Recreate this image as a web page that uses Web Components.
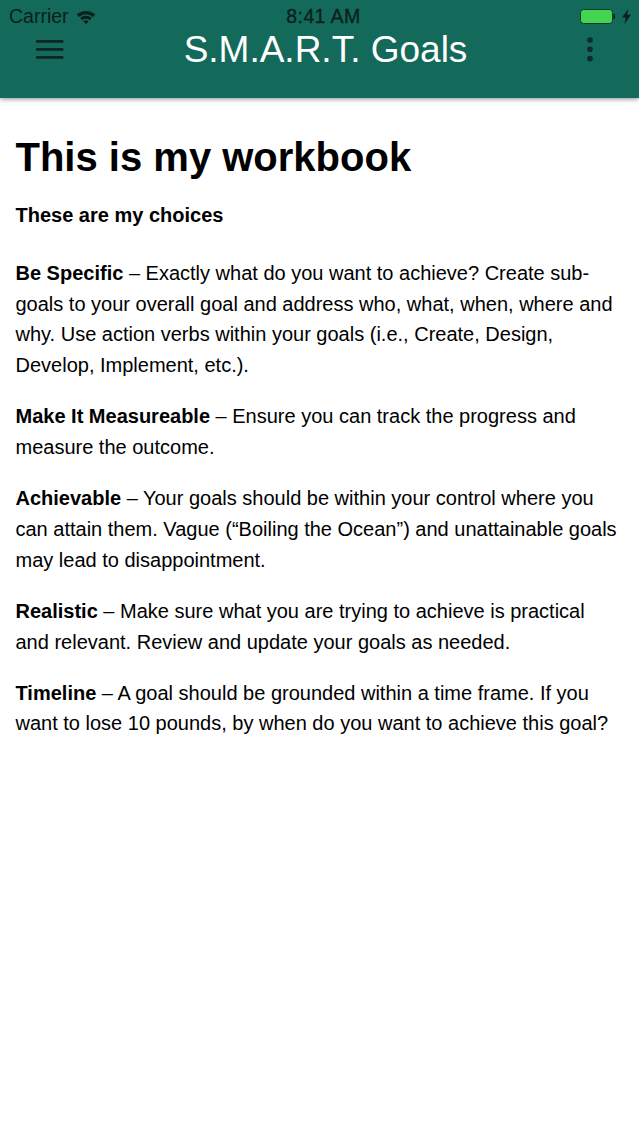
<!DOCTYPE html>
<html>
<head>
<meta charset="utf-8">
<title>S.M.A.R.T. Goals</title>
<style>
  html, body { margin: 0; padding: 0; background: #fff; }
  body { font-family: "Liberation Sans", Arial, sans-serif; color: #000; overflow: hidden; }
</style>
</head>
<body>
<goal-header title="S.M.A.R.T. Goals"></goal-header>
<goal-page>
  <span slot="heading">This is my workbook</span>
  <span slot="subheading">These are my choices</span>
  <goal-item name="Be Specific">Exactly what do you want to achieve? Create sub-<br>goals to your overall goal and address who, what, when, where and<br>why. Use action verbs within your goals (i.e., Create, Design,<br>Develop, Implement, etc.).</goal-item>
  <goal-item name="Make It Measureable">Ensure you can track the progress and<br>measure the outcome.</goal-item>
  <goal-item name="Achievable">Your goals should be within your control where you<br>can attain them. Vague (“Boiling the Ocean”) and unattainable goals<br>may lead to disappointment.</goal-item>
  <goal-item name="Realistic">Make sure what you are trying to achieve is practical<br>and relevant. Review and update your goals as needed.</goal-item>
  <goal-item name="Timeline">A goal should be grounded within a time frame. If you<br>want to lose 10 pounds, by when do you want to achieve this goal?</goal-item>
</goal-page>
<script>
class GoalHeader extends HTMLElement {
  constructor() {
    super();
    this.attachShadow({ mode: 'open' });
    this.shadowRoot.innerHTML = `
      <style>
        :host {
          display: block;
          height: 98px;
          background: #13695a;
          box-shadow: 0 1px 5px rgba(0, 0, 0, 0.45);
          position: relative;
        }
        .status {
          height: 32px;
          padding: 0 8px 0 9px;
          display: grid;
          grid-template-columns: 1fr auto 1fr;
          align-items: center;
          font-size: 19.5px;
          color: #0b1f1c;
        }
        .left { display: flex; align-items: center; gap: 7px; }
        .right { display: flex; align-items: center; justify-content: flex-end; gap: 7px; }
        .time { -webkit-text-stroke: 0.3px #0b1f1c; letter-spacing: 0.4px; margin-left: 7px; }
        .bar {
          display: flex;
          align-items: flex-start;
          justify-content: space-between;
          padding: 0 46px 0 35px;
        }
        .title {
          font-size: 37px;
          line-height: 36px;
          color: #fff;
        }
        svg { display: block; }
      </style>
      <div class="status">
        <div class="left">
          <span>Carrier</span>
          <svg width="20" height="15" viewBox="0 0 20 15">
            <path d="M0.8 5.6 A13.5 13.5 0 0 1 19.2 5.6 L17 8 A10.3 10.3 0 0 0 3 8 Z" fill="#0b1f1c"/>
            <path d="M4.2 9 A8.500 8.500 0 0 1 15.800 9 L13.700 11.300 A5.500 5.500 0 0 0 6.300 11.300 Z" fill="#0b1f1c"/>
            <path d="M7.400 12.400 A3.800 3.800 0 0 1 12.600 12.400 L10 15 Z" fill="#0b1f1c"/>
          </svg>
        </div>
        <span class="time">8:41 AM</span>
        <div class="right">
          <svg width="36" height="15" viewBox="0 0 36 15">
            <rect x="1.5" y="0.5" width="32" height="14" rx="3" fill="#43d552" stroke="#0b3a2c" stroke-width="1"/>
            <rect x="34.4" y="5" width="1.6" height="5" rx="0.8" fill="#0b1f1c"/>
          </svg>
          <svg width="9" height="15" viewBox="0 0 9 15">
            <path d="M6.200 0 L0 8.500 H3.600 L2.500 15 L9 5.800 H5.200 Z" fill="#0b1f1c"/>
          </svg>
        </div>
      </div>
      <div class="bar">
        <svg width="29" height="20" viewBox="0 0 29 20" style="margin-top:8px">
          <rect x="1" y="0" width="27.500" height="2.700" rx="1" fill="#0f2423"/>
          <rect x="1" y="8" width="27.500" height="2.700" rx="1" fill="#0f2423"/>
          <rect x="1" y="16" width="27.500" height="2.700" rx="1" fill="#0f2423"/>
        </svg>
        <span class="title"></span>
        <svg width="6" height="25" viewBox="0 0 6 25" style="margin-top:5px">
          <circle cx="3" cy="3" r="2.8" fill="#0f2a2e"/>
          <circle cx="3" cy="12.300" r="2.8" fill="#0f2a2e"/>
          <circle cx="3" cy="21.600" r="2.8" fill="#0f2a2e"/>
        </svg>
      </div>
    `;
    this.shadowRoot.querySelector('.title').textContent = this.getAttribute('title') || '';
  }
}

class GoalPage extends HTMLElement {
  constructor() {
    super();
    this.attachShadow({ mode: 'open' });
    this.shadowRoot.innerHTML = `
      <style>
        :host {
          display: block;
          padding: 36px 15px 0 15.5px;
        }
        h1 {
          margin: 0;
          font-size: 40px;
          line-height: 46px;
          font-weight: 700;
        }
        h2 {
          margin: 23px 0 30.6px;
          font-size: 20px;
          line-height: 24px;
          font-weight: 700;
        }
        .items { display: flex; flex-direction: column; gap: 20px; }
      </style>
      <h1><slot name="heading"></slot></h1>
      <h2><slot name="subheading"></slot></h2>
      <div class="items"><slot></slot></div>
    `;
  }
}

class GoalItem extends HTMLElement {
  constructor() {
    super();
    this.attachShadow({ mode: 'open' });
    this.shadowRoot.innerHTML = `
      <style>
        :host {
          display: block;
          font-size: 20px;
          line-height: 30.9px;
          white-space: nowrap;
        }
        b { font-weight: 700; }
      </style>
      <b></b> – <slot></slot>
    `;
    this.shadowRoot.querySelector('b').textContent = this.getAttribute('name') || '';
  }
}

customElements.define('goal-header', GoalHeader);
customElements.define('goal-page', GoalPage);
customElements.define('goal-item', GoalItem);
</script>
</body>
</html>
